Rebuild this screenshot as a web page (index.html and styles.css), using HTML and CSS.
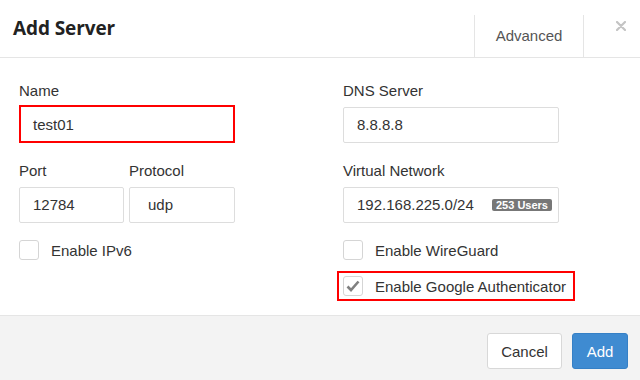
FILE: index.html
```html
<!DOCTYPE html>
<html>
<head>
<meta charset="utf-8">
<link rel="stylesheet" href="styles.css">
</head>
<body>
<div class="modal">
  <div class="header">
    <div class="title">Add Server</div>
    <div class="tab">Advanced</div>
    <div class="close">
      <svg width="10" height="10" viewBox="0 0 10 10"><path d="M1 1L9 9M9 1L1 9" stroke="#c4c4c4" stroke-width="2.2" stroke-linecap="round"/></svg>
    </div>
  </div>
  <div class="content">
    <div class="col">
      <div class="field">
        <div class="label">Name</div>
        <div class="input flag">test01</div>
      </div>
      <div class="pair">
        <div class="field port">
          <div class="label">Port</div>
          <div class="input">12784</div>
        </div>
        <div class="field proto">
          <div class="label">Protocol</div>
          <div class="input select">udp</div>
        </div>
      </div>
      <div class="check"><span class="box"></span><span>Enable IPv6</span></div>
    </div>
    <div class="col">
      <div class="field">
        <div class="label">DNS Server</div>
        <div class="input">8.8.8.8</div>
      </div>
      <div class="field">
        <div class="label">Virtual Network</div>
        <div class="input net"><span>192.168.225.0/24</span><span class="badge">253 Users</span></div>
      </div>
      <div class="check"><span class="box"></span><span>Enable WireGuard</span></div>
      <div class="check marked"><span class="box"><svg width="14" height="12" viewBox="0 0 14 12"><path d="M1.5 6.5L5 10L12.5 1.5" fill="none" stroke="#808080" stroke-width="2.6"/></svg></span><span>Enable Google Authenticator</span></div>
    </div>
  </div>
  <div class="footer">
    <button class="btn cancel">Cancel</button>
    <button class="btn add">Add</button>
  </div>
</div>
</body>
</html>
```

FILE: styles.css
```css
html, body {
  margin: 0;
  padding: 0;
  height: 380px;
  width: 640px;
  background: #fff;
  font-family: "Liberation Sans", Arial, sans-serif;
  font-size: 15px;
  color: #333;
  overflow: hidden;
}
.modal {
  display: flex;
  flex-direction: column;
  height: 380px;
}
.header {
  height: 58px;
  box-sizing: border-box;
  border-bottom: 1px solid #e5e5e5;
  display: flex;
  align-items: flex-end;
  flex-shrink: 0;
}
.title {
  flex: 1;
  align-self: stretch;
  padding-left: 13px;
  padding-top: 15px;
  font-family: "Open Sans", sans-serif;
  font-weight: 700;
  font-size: 19px;
  line-height: 26px;
  color: #222;
  letter-spacing: -0.1px;
}
.tab {
  height: 42px;
  width: 110px;
  border-left: 1px solid #e5e5e5;
  border-right: 1px solid #e5e5e5;
  box-sizing: border-box;
  text-align: center;
  font-size: 15px;
  line-height: 42px;
  color: #555;
}
.close {
  width: 56px;
  align-self: stretch;
  display: flex;
  justify-content: center;
  padding-top: 21px;
  padding-left: 18px;
  box-sizing: border-box;
}
.content {
  flex: 1;
  min-height: 0;
  display: grid;
  grid-template-columns: 216px 216px;
  column-gap: 108px;
  padding: 23px 19px 0;
  align-items: start;
}
.col {
  display: flex;
  flex-direction: column;
}
.field {
  display: flex;
  flex-direction: column;
  margin-bottom: 18px;
}
.label {
  line-height: 20px;
  margin-bottom: 6px;
}
.input {
  height: 36px;
  box-sizing: border-box;
  border: 1px solid #ddd;
  border-radius: 2px;
  padding: 0 13px;
  line-height: 34px;
  color: #333;
}
.input.flag {
  border: 2px solid #f00;
  border-radius: 0;
  height: 38px;
  margin-top: -2px;
  padding: 0 12px;
  line-height: 35px;
}
.pair {
  display: flex;
  gap: 5px;
}
.port { width: 105px; }
.proto { width: 106px; }
.input.select { padding-left: 18px; }
.input.net {
  display: flex;
  align-items: center;
  justify-content: space-between;
  padding-right: 6px;
}
.badge {
  background: #777;
  color: #fff;
  font-weight: 700;
  font-size: 11px;
  line-height: 12px;
  height: 12px;
  padding: 0 4px;
  border-radius: 2px;
}
.check {
  display: flex;
  align-items: center;
  gap: 12px;
  height: 20px;
  margin-top: -1px;
  margin-bottom: 17px;
}
.box {
  width: 20px;
  height: 20px;
  box-sizing: border-box;
  border: 1px solid #d5d5d5;
  border-radius: 3px;
  display: flex;
  align-items: center;
  justify-content: center;
}
.check.marked {
  border: 2px solid #f00;
  margin-left: -6px;
  margin-right: -16px;
  padding: 4px 4px;
  height: 30px;
  box-sizing: border-box;
  margin-top: -6px;
  margin-bottom: 0;
}
.footer {
  flex-shrink: 0;
  height: 65px;
  box-sizing: border-box;
  border-top: 1px solid #e5e5e5;
  background: #f3f3f3;
  display: flex;
  justify-content: flex-end;
  align-items: flex-start;
  gap: 10px;
  padding: 17px 12px 0 0;
}
.btn {
  height: 36px;
  box-sizing: border-box;
  border-radius: 3px;
  font-family: "Liberation Sans", Arial, sans-serif;
  font-size: 15px;
  padding: 0;
}
.cancel {
  width: 75px;
  background: #fff;
  border: 1px solid #d8d8d8;
  color: #333;
}
.add {
  width: 56px;
  background: #3f8bd1;
  border: 1px solid #3580c6;
  color: #fff;
}
```
